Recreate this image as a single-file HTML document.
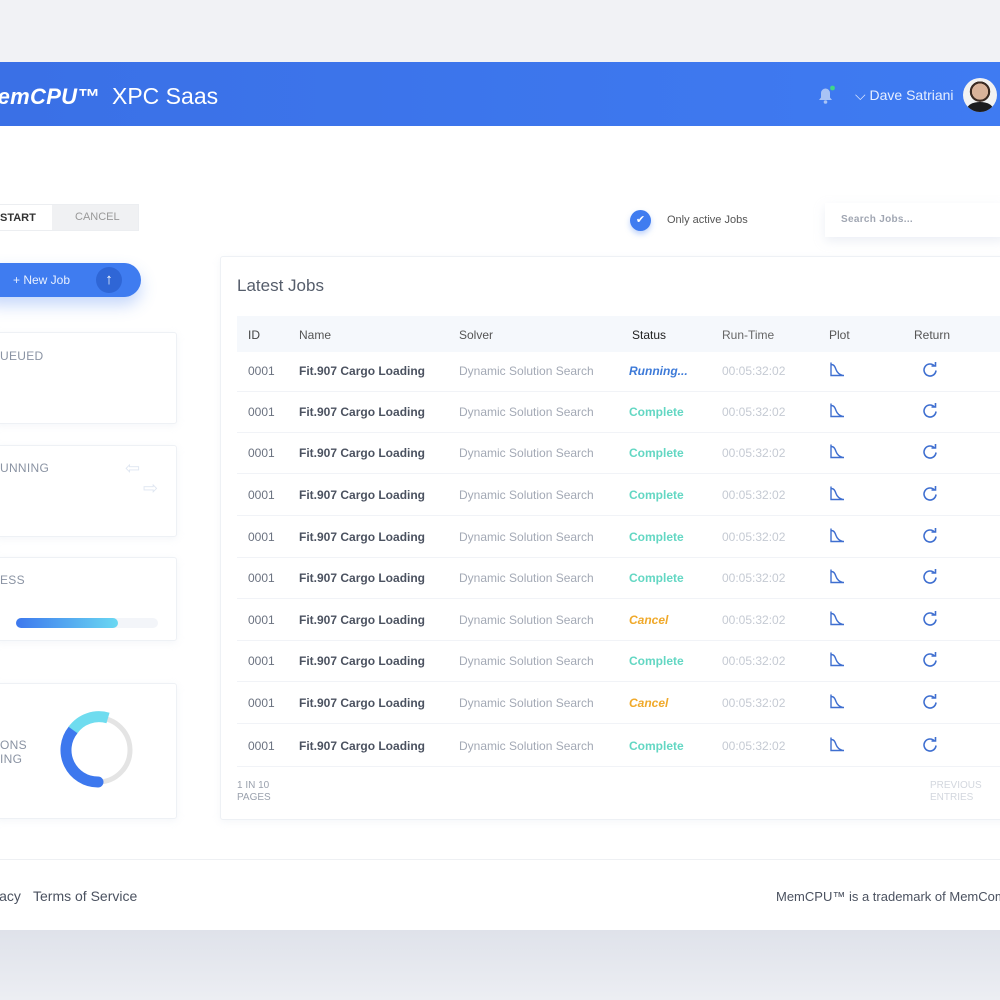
<!DOCTYPE html>
<html><head><meta charset="utf-8"><style>
*{margin:0;padding:0;box-sizing:border-box}
body{width:1000px;height:1000px;overflow:hidden;background:#fff;font-family:"Liberation Sans",sans-serif;position:relative}
.a{position:absolute}
.top{left:0;top:0;width:1000px;height:62px;background:#f1f2f5}
.hdr{left:0;top:62px;width:1000px;height:64px;background:linear-gradient(90deg,#3a70e6,#3f7bf2)}
.bot{left:0;top:930px;width:1000px;height:70px;background:linear-gradient(#dfe2ea,#eceef3)}
.card{background:#fff;border:1px solid #eef1f5;border-radius:3px;box-shadow:0 2px 8px rgba(200,210,225,.2)}
.lbl{font-size:12px;color:#8a93a3;letter-spacing:.3px}
.row{left:237px;width:763px;height:41px;border-bottom:1px solid #f1f3f7;font-size:12px}
.row span{position:absolute;top:50%;transform:translateY(-50%);white-space:nowrap}
.c1{left:11px;color:#6b7280}.c2{left:62px;color:#4b5260;font-weight:bold}.c3{left:222px;color:#a3a9b5}
.c4{left:392px;font-weight:bold}.c5{left:485px;color:#c5cad3}.c6{left:592px}.c7{left:684px}
</style></head><body>
<div class="a top"></div>
<div class="a hdr"></div>
<div class="a" style="left:-21px;top:84px;color:#fff;font-size:22px;font-style:italic;font-weight:bold;letter-spacing:.3px">MemCPU™</div>
<div class="a" style="left:112px;top:83px;color:#fff;font-size:23px">XPC Saas</div>
<svg class="a" style="left:816px;top:84px" width="22" height="22" viewBox="0 0 22 22"><path d="M3 16h13l-2-2.5V9a4.5 4.5 0 0 0-9 0v4.5z" fill="#a9c3f5"/><circle cx="9.5" cy="18" r="1.8" fill="#a9c3f5"/><circle cx="16.5" cy="4" r="2.4" fill="#3fd68a"/></svg>
<div class="a" style="left:855px;top:87px;color:#e6eeff;font-size:14px">⌵ Dave Satriani</div>
<div class="a" style="left:963px;top:78px;width:34px;height:34px;border-radius:50%;background:radial-gradient(circle at 50% 40%,#d9b39a 0 30%,#3a2a22 31% 38%,#f2f2f2 39%);overflow:hidden"><div style="position:absolute;left:4px;top:24px;width:26px;height:14px;border-radius:50% 50% 0 0;background:#1c1c1e"></div></div>

<div class="a" style="left:0;top:204px;width:139px;height:27px;background:#f0f1f3;border:1px solid #eceef1"></div>
<div class="a" style="left:0;top:205px;width:52px;height:25px;background:#fff"></div>
<div class="a" style="left:0;top:212px;font-size:11px;color:#333;font-weight:bold">START</div>
<div class="a" style="left:75px;top:211px;font-size:11px;color:#999">CANCEL</div>

<div class="a" style="left:-20px;top:263px;width:161px;height:34px;border-radius:17px;background:#3f7cf0;box-shadow:0 8px 16px rgba(63,124,240,.3)"></div>
<div class="a" style="left:13px;top:273px;color:#e8f0ff;font-size:12px">+ New Job</div>
<div class="a" style="left:96px;top:267px;width:26px;height:26px;border-radius:50%;background:#2f66d6;color:#fff;text-align:center;font-size:15px;line-height:26px">↑</div>

<div class="a card" style="left:-4px;top:332px;width:181px;height:92px"></div>
<div class="a lbl" style="left:0;top:349px">UEUED</div>
<div class="a card" style="left:-4px;top:445px;width:181px;height:92px"></div>
<div class="a lbl" style="left:0;top:461px">UNNING</div>
<div class="a" style="left:125px;top:458px;color:#dfe6f1;font-size:18px">⇦</div>
<div class="a" style="left:143px;top:478px;color:#dfe6f1;font-size:18px">⇨</div>
<div class="a card" style="left:-4px;top:557px;width:181px;height:84px"></div>
<div class="a lbl" style="left:0;top:573px">ESS</div>
<div class="a" style="left:16px;top:618px;width:142px;height:10px;border-radius:5px;background:#f3f5f9"></div>
<div class="a" style="left:16px;top:618px;width:102px;height:10px;border-radius:5px;background:linear-gradient(90deg,#3d78ee,#6ad8f2)"></div>
<div class="a card" style="left:-4px;top:683px;width:181px;height:136px"></div>
<div class="a lbl" style="left:0;top:738px;line-height:14px">ONS<br>ING</div>
<svg class="a" style="left:54px;top:706px" width="88" height="88" viewBox="0 0 88 88">
<circle cx="44" cy="44" r="32" fill="none" stroke="#e4e4e4" stroke-width="5"/>
<path d="M44 76A32 32 0 0 1 19 24" fill="none" stroke="#3d78ee" stroke-width="11" stroke-linecap="round"/>
<path d="M19 24A32 32 0 0 1 54 12" fill="none" stroke="#6fdcef" stroke-width="11"/>
</svg>

<div class="a" style="left:630px;top:210px;width:21px;height:21px;border-radius:50%;background:#3f7cf0;color:#fff;font-size:11px;text-align:center;line-height:21px;box-shadow:0 3px 6px rgba(63,124,240,.35)">✔</div>
<div class="a" style="left:667px;top:214px;font-size:11px;color:#555">Only active Jobs</div>
<div class="a" style="left:825px;top:203px;width:180px;height:34px;box-shadow:0 4px 10px rgba(200,210,225,.35);background:#fff"></div>
<div class="a" style="left:841px;top:214px;font-size:10px;color:#a0a6b2;font-weight:bold;letter-spacing:.3px">Search Jobs...</div>

<div class="a card" style="left:220px;top:256px;width:800px;height:564px"></div>
<div class="a" style="left:237px;top:276px;font-size:17px;color:#555d6b">Latest Jobs</div>
<div class="a" style="left:237px;top:316px;width:763px;height:36px;background:#f5f8fc"></div>
<div class="a row" style="top:314px;border:none;color:#4b5260">
<span class="c1" style="color:#444">ID</span><span class="c2" style="font-weight:normal;color:#555">Name</span><span class="c3" style="color:#555">Solver</span><span class="c4" style="font-weight:normal;color:#222;left:395px">Status</span><span class="c5" style="color:#666">Run-Time</span><span class="c6" style="color:#555">Plot</span><span class="c7" style="left:677px;color:#555">Return</span></div>

<div id="rows"></div>
<script>
var st=["R","C","C","C","C","C","X","C","X","C"],ys=[351,392,433,475,517,558,600,641,683,726],h="";
for(var i=0;i<10;i++){var s=st[i],t=s=="R"?'<span class="c4" style="color:#3d7ad8;font-style:italic">Running...</span>':s=="X"?'<span class="c4" style="color:#f0a92a;font-style:italic">Cancel</span>':'<span class="c4" style="color:#63d7c3">Complete</span>';
h+='<div class="a row" style="top:'+ys[i]+'px"><span class="c1">0001</span><span class="c2">Fit.907 Cargo Loading</span><span class="c3">Dynamic Solution Search</span>'+t+'<span class="c5">00:05:32:02</span><span class="c6"><svg width="16" height="16" viewBox="0 0 16 16"><path d="M2 1v13h13M2 3c3 0 4 2 5 5s3 5 7 6" fill="none" stroke="#3f6fd0" stroke-width="1.4"/></svg></span><span class="c7"><svg width="18" height="18" viewBox="0 0 18 18"><path d="M13.5 5.5A6 6 0 1 0 15 10" fill="none" stroke="#3f6fd0" stroke-width="1.6"/><path d="M10.5 5.5h4v-4" fill="none" stroke="#3f6fd0" stroke-width="1.6"/></svg></span></div>';}
document.getElementById("rows").innerHTML=h;
</script>
<div class="a" style="left:237px;top:780px;font-size:10px;color:#9aa1ad;line-height:12px">1 IN 10<br>PAGES</div>
<div class="a" style="left:930px;top:780px;font-size:10px;color:#d3d7de;line-height:12px">PREVIOUS<br>ENTRIES</div>

<div class="a" style="left:0;top:859px;width:1000px;height:1px;background:#eef0f3"></div>
<div class="a" style="left:-25px;top:888px;font-size:14px;color:#4b5260">Privacy</div>
<div class="a" style="left:33px;top:888px;font-size:14px;color:#4b5260">Terms of Service</div>
<div class="a" style="left:776px;top:889px;font-size:13px;color:#4b5260;white-space:nowrap">MemCPU™ is a trademark of MemComputing</div>
<div class="a bot"></div>
</body></html>
